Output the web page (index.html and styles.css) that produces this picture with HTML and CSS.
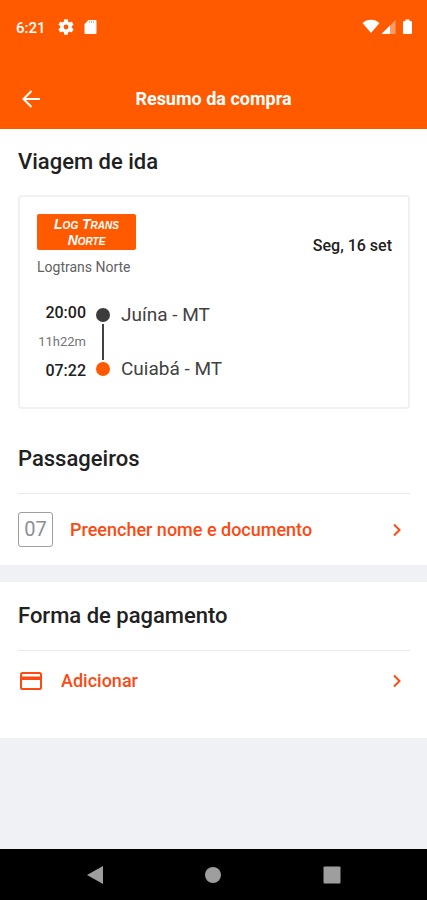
FILE: index.html
```html
<!DOCTYPE html>
<html lang="pt-BR">
<head>
<meta charset="utf-8">
<meta name="viewport" content="width=device-width, initial-scale=1">
<title>Resumo da compra</title>
<link rel="stylesheet" href="styles.css">
</head>
<body>
<div class="status-bar">
  <span class="clock">6:21</span>
  <svg class="status-gear" width="16" height="16" viewBox="2 2 20 20" aria-hidden="true"><path fill="currentColor" d="M19.14 12.94c.04-.3.06-.61.06-.94s-.02-.64-.07-.94l2.03-1.58a.49.49 0 0 0 .12-.61l-1.92-3.32a.49.49 0 0 0-.59-.22l-2.39.96a7 7 0 0 0-1.62-.94l-.36-2.54a.48.48 0 0 0-.48-.41h-3.84a.48.48 0 0 0-.47.41l-.36 2.54c-.59.24-1.13.57-1.62.94l-2.39-.96a.48.48 0 0 0-.59.22L2.74 8.87a.48.48 0 0 0 .12.61l2.03 1.58a7.3 7.3 0 0 0 0 1.88l-2.03 1.58a.49.49 0 0 0-.12.61l1.92 3.32c.12.22.37.29.59.22l2.39-.96c.5.38 1.03.7 1.62.94l.36 2.54c.05.24.24.41.48.41h3.84c.24 0 .44-.17.47-.41l.36-2.54a7 7 0 0 0 1.62-.94l2.39.96c.22.08.47 0 .59-.22l1.92-3.32a.48.48 0 0 0-.12-.61zM12 15a3 3 0 1 1 0-6 3 3 0 0 1 0 6z"/></svg>
  <svg class="status-card" width="13" height="16" viewBox="0 0 13 16" aria-hidden="true"><path fill="currentColor" d="M4.500 1H11.500a1 1 0 0 1 1 1v12a1 1 0 0 1-1 1H1.500a1 1 0 0 1-1-1V5z"/><path stroke="#ff5a00" stroke-opacity=".5" d="M5.500 2v2M7.500 2v2M9.500 2v2"/></svg>
  <div class="signals">
    <svg width="18" height="16" viewBox="0 0 18 16" aria-hidden="true"><path fill="currentColor" d="M.5 4C5-.5 13-.5 17.500 4L9 14z"/></svg>
    <svg width="15" height="16" viewBox="0 0 15 16" aria-hidden="true"><path fill="currentColor" fill-opacity=".4" d="M14.500 1v14H.5z"/><path fill="currentColor" d="M9 6.500V15H.5z"/></svg>
    <svg class="battery" width="9" height="16" viewBox="0 0 9 16" aria-hidden="true"><path fill="currentColor" d="M2.500.5h4v1.500H8a1 1 0 0 1 1 1v11a1 1 0 0 1-1 1H1a1 1 0 0 1-1-1V3a1 1 0 0 1 1-1h1.500z"/></svg>
  </div>
</div>
<header class="app-bar">
  <button class="back" type="button" aria-label="Voltar">
    <svg width="20" height="20" viewBox="0 0 20 20" aria-hidden="true"><path fill="none" stroke="currentColor" stroke-width="2" d="M19 10H3M10.500 2L2.500 10l8 8"/></svg>
  </button>
  <h1>Resumo da compra</h1>
</header>
<main>
  <section class="trip">
    <h2>Viagem de ida</h2>
    <article class="ticket">
      <div class="company">
        <div class="brand">
          <div class="logo"><span>Log Trans</span><span>Norte</span></div>
          <p>Logtrans Norte</p>
        </div>
        <time class="date">Seg, 16 set</time>
      </div>
      <div class="route">
        <div class="times">
          <time>20:00</time>
          <span class="duration">11h22m</span>
          <time>07:22</time>
        </div>
        <div class="track"><i class="stop"></i><i class="line"></i><i class="stop stop-end"></i></div>
        <div class="cities"><span>Juína - MT</span><span>Cuiabá - MT</span></div>
      </div>
    </article>
  </section>
  <section class="passengers">
    <h2>Passageiros</h2>
    <button class="row" type="button">
      <span class="seat">07</span>
      <span class="label">Preencher nome e documento</span>
      <svg width="10" height="14" viewBox="0 0 10 14" aria-hidden="true"><path fill="none" stroke="currentColor" stroke-width="2" d="M2 1.500L7.500 7 2 12.500"/></svg>
    </button>
  </section>
  <section class="payment">
    <h2>Forma de pagamento</h2>
    <button class="row" type="button">
      <svg class="card-icon" width="24" height="20" viewBox="0 0 24 20" aria-hidden="true"><rect x="2" y="2" width="20" height="16" rx="1.500" fill="none" stroke="currentColor" stroke-width="2"/><path fill="currentColor" d="M2 5.500h20v3.500H2z"/></svg>
      <span class="label">Adicionar</span>
      <svg width="10" height="14" viewBox="0 0 10 14" aria-hidden="true"><path fill="none" stroke="currentColor" stroke-width="2" d="M2 1.500L7.500 7 2 12.500"/></svg>
    </button>
  </section>
</main>
<nav class="system-nav">
  <button type="button" aria-label="Voltar à tela anterior"><svg width="18" height="18" viewBox="0 0 18 18" aria-hidden="true"><path fill="currentColor" d="M17 0v18L1 9z"/></svg></button>
  <button type="button" aria-label="Início"><svg width="18" height="18" viewBox="0 0 18 18" aria-hidden="true"><circle cx="9" cy="9" r="8" fill="currentColor"/></svg></button>
  <button type="button" aria-label="Recentes"><svg width="18" height="18" viewBox="0 0 18 18" aria-hidden="true"><rect x=".5" y=".5" width="17" height="17" rx="1" fill="currentColor"/></svg></button>
</nav>
</body>
</html>
```
FILE: styles.css
```css
* {
  box-sizing: border-box;
}

body {
  margin: 0;
  min-height: 100vh;
  display: flex;
  flex-direction: column;
  background: #eff1f5;
  color: #212121;
  font-family: Roboto, "Liberation Sans", sans-serif;
}

h1, h2, p {
  margin: 0;
  font-weight: 500;
}

button {
  margin: 0;
  padding: 0;
  border: 0;
  background: none;
  color: inherit;
  font: inherit;
  cursor: pointer;
}

svg {
  display: block;
  flex: none;
}

.status-bar {
  display: flex;
  align-items: center;
  height: 54px;
  padding: 0 15px 0 16px;
  background: #ff5a00;
  color: #fff;
}

.clock {
  padding-top: 2px;
  font-size: 15px;
  font-weight: 500;
}

.status-gear {
  margin-left: 12px;
}

.status-card {
  margin-left: 10px;
}

.signals {
  display: flex;
  gap: 1px;
  margin-left: auto;
}

.battery {
  margin-left: 6px;
}

.app-bar {
  display: grid;
  grid-template-columns: 20px 1fr 20px;
  align-items: center;
  height: 75px;
  padding: 14px 21px 0;
  background: #ff5a00;
  color: #fff;
}

.app-bar h1 {
  font-size: 18px;
  line-height: 24px;
  font-weight: 700;
  text-align: center;
}

main {
  flex: 1;
}

section {
  padding: 0 17px 0 18px;
  background: #fff;
}

h2 {
  font-size: 22px;
  line-height: 28px;
}

.trip {
  padding-top: 19px;
}

.ticket {
  margin-top: 19px;
  padding: 17px 16px 26px 17px;
  border: 2px solid #f1f1f2;
  border-radius: 4px;
}

.company {
  display: flex;
  align-items: center;
  justify-content: space-between;
}

.logo {
  display: flex;
  flex-direction: column;
  align-items: center;
  justify-content: center;
  width: 99px;
  height: 36px;
  border-radius: 2px;
  background: #ff5a00;
  color: #fff;
  font-family: "Liberation Sans", sans-serif;
  font-size: 14px;
  line-height: 16px;
  font-style: italic;
  font-weight: 700;
  font-variant-caps: small-caps;
}

.brand p {
  margin-top: 8px;
  color: #616161;
  font-size: 14px;
  line-height: 18px;
  font-weight: 400;
}

.date {
  font-size: 16px;
  font-weight: 500;
}

.route {
  display: flex;
  margin-top: 27px;
}

.times {
  display: flex;
  flex-direction: column;
  justify-content: space-between;
  width: 49px;
  text-align: right;
  font-size: 16px;
  line-height: 20px;
  font-weight: 500;
}

.duration {
  color: #757575;
  font-size: 13px;
  font-weight: 400;
}

.track {
  display: flex;
  flex-direction: column;
  align-items: center;
  gap: 2px;
  width: 14px;
  margin: 5px 11px 5px 10px;
}

.stop {
  width: 14px;
  height: 14px;
  border-radius: 50%;
  background: #3c3c3c;
}

.stop-end {
  background: #ff5a00;
}

.line {
  flex: 1;
  width: 2px;
  background: #424242;
}

.cities {
  display: flex;
  flex-direction: column;
  justify-content: space-between;
  height: 78px;
  color: #424242;
  font-size: 19px;
  line-height: 24px;
}

.passengers {
  padding-top: 36px;
}

.row {
  display: flex;
  align-items: center;
  width: 100%;
  margin-top: 20px;
  border-top: 1px solid #e9e9ec;
  color: #fc4a12;
  text-align: left;
}

.row .label {
  flex: 1;
  font-size: 18px;
  line-height: 24px;
  font-weight: 500;
}

.row svg:last-child {
  margin-right: 8px;
}

.passengers .row {
  gap: 17px;
  height: 72px;
}

.seat {
  width: 35px;
  height: 35px;
  border: 1px solid #9e9e9e;
  border-radius: 3px;
  color: #8a9095;
  font-size: 20px;
  line-height: 33px;
  text-align: center;
}

.payment {
  margin-top: 17px;
  padding-top: 20px;
  padding-bottom: 27px;
}

.payment .row {
  gap: 18px;
  height: 61px;
}

.system-nav {
  display: flex;
  justify-content: space-around;
  align-items: center;
  height: 51px;
  padding: 0 36px;
  background: #000;
  color: #9e9e9e;
}

.system-nav button {
  display: grid;
  place-items: center;
}

.card-icon {
  margin-left: 1px;
}
```
